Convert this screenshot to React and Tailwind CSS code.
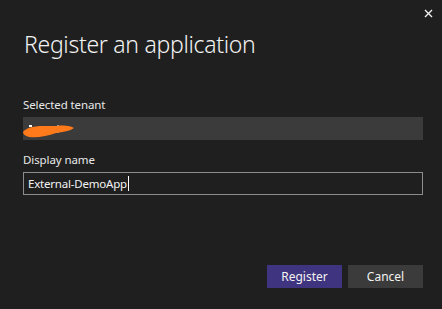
export default function App() {
  return (
    <div
      className="relative w-[442px] h-[309px] bg-[#1f1f1f] text-white flex flex-col pl-[23px] pr-[19px]"
      style={{ fontFamily: '"Segoe UI", "Noto Sans", sans-serif' }}
    >
      {/* close */}
      <button className="absolute top-[8px] right-[9px] w-[10px] h-[10px] flex items-center justify-center">
        <svg width="9" height="9" viewBox="0 0 9 9" fill="none" stroke="#f0f0f0" strokeWidth="1.4">
          <path d="M1 1 L8 8 M8 1 L1 8" />
        </svg>
      </button>

      <h1 className="mt-[29px] ml-[1px] text-[23px] leading-[30px] font-light text-[#f2f2f2] tracking-[-0.3px]">
        Register an application
      </h1>

      <label className="mt-[38px] text-[11.5px] leading-[16px] tracking-[-0.1px] text-[#e8e8e8]">Selected tenant</label>
      <div className="mt-[4px] h-[23px] w-[400px] bg-[#3b3b3b] flex items-center">
        {/* redacted tenant name */}
        <svg width="52" height="18" viewBox="0 0 52 18" className="mt-[4px]">
          <path d="M35 3 L35 11" stroke="#ffffff" strokeWidth="1" />
          <rect x="6" y="3" width="3" height="2" fill="#ffffff" />
          <path
            d="M0 10 C3 6 10 4 20 4 L34 4 C42 3 48 4 51 6 C47 9 40 10 33 11 C25 14 14 16 6 15 C2 14 0 12 0 10 Z"
            fill="#ff7a1a"
          />
        </svg>
      </div>

      <label className="mt-[12px] text-[11.5px] leading-[16px] tracking-[-0.1px] text-[#e8e8e8]">Display name</label>
      <div className="mt-[4px] h-[23px] w-[400px] border border-[#8c8c8c] bg-[#1f1f1f] flex items-center px-[4px]">
        <span className="text-[11.5px] tracking-[-0.2px] text-[#f2f2f2]">External-DemoApp</span>
        <span className="w-px h-[15px] bg-white ml-[1px]" />
      </div>

      <div className="mt-auto mb-[21px] flex justify-end gap-[6px]">
        <button className="w-[75px] h-[23px] bg-[#3f347f] text-[12px] text-[#f2f2f2]">Register</button>
        <button className="w-[75px] h-[23px] bg-[#3b3b3b] text-[12px] text-[#f2f2f2]">Cancel</button>
      </div>
    </div>
  )
}
